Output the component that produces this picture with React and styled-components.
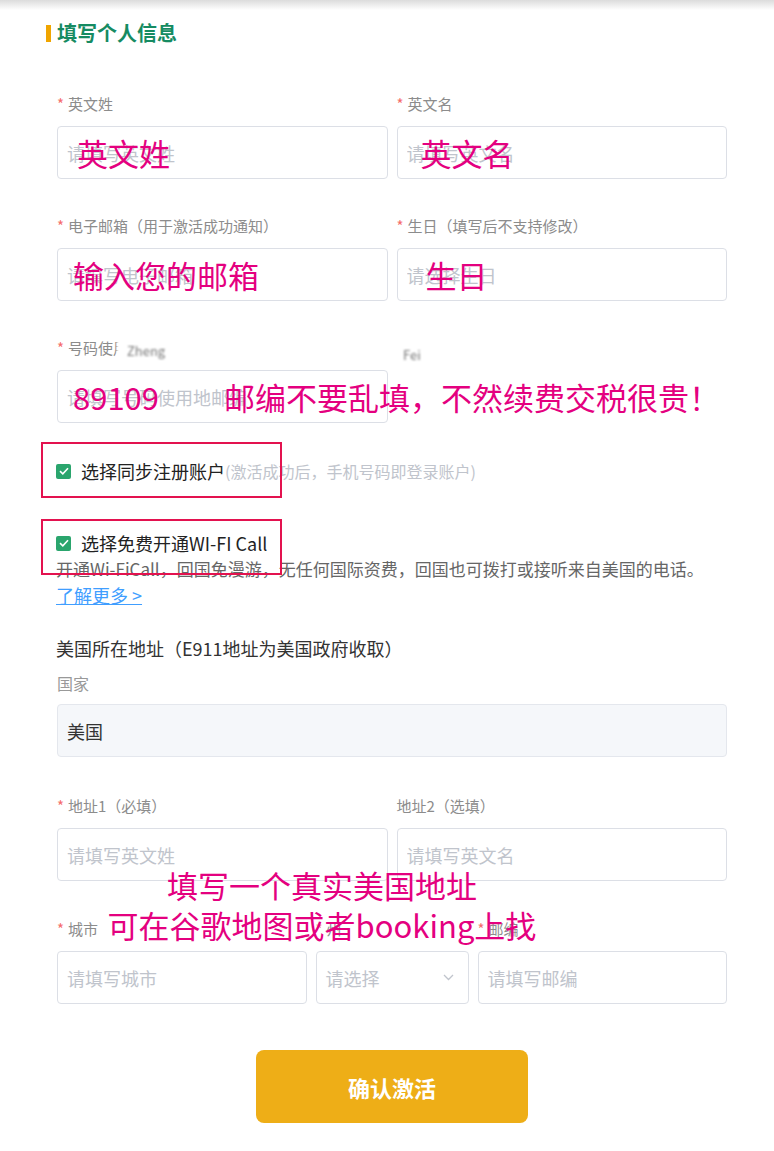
import React from 'react';
import styled, { createGlobalStyle } from 'styled-components';

const Global = createGlobalStyle`
  html, body { margin: 0; padding: 0; background: #fff; }
  body { font-family: "Noto Sans CJK SC", "Noto Sans", sans-serif; color: #333; }
  * { box-sizing: border-box; }
`;

const TopShade = styled.div`
  height: 10px;
  background: linear-gradient(#dcdcdc, #ffffff);
`;

const Page = styled.main`
  width: 774px;
  padding: 0 47px 28px 57px;
`;

const Heading = styled.h2`
  display: flex;
  align-items: center;
  gap: 6px;
  margin: 12px 0 0 -11px;
  height: 22px;
  font-size: 20px;
  font-weight: 700;
  color: #168b62;
  line-height: 22px;
`;

const HeadBar = styled.span`
  width: 5px;
  height: 17px;
  background: #f0a500;
`;

const Grid = styled.div`
  display: grid;
  grid-template-columns: ${p => p.$cols || '1fr 1fr'};
  column-gap: 9px;
  row-gap: 37px;
  margin-top: ${p => p.$mt || 0}px;
`;

const Field = styled.div`
  position: relative;
  display: flex;
  flex-direction: column;
`;

const Label = styled.div`
  height: 20px;
  line-height: 20px;
  font-size: 15px;
  color: #8c8c8c;
  margin-bottom: 12px;
  white-space: nowrap;
`;

const Star = styled.span`
  color: #f56c6c;
  margin-right: 4px;
`;

const InputWrap = styled.div`
  position: relative;
`;

const Input = styled.input`
  display: block;
  width: 100%;
  height: 53px;
  border: 1px solid #dcdfe6;
  border-radius: 4px;
  padding: 0 9px;
  font-family: inherit;
  font-size: 18px;
  color: #333;
  background: ${p => (p.$disabled ? '#f5f7fa' : '#fff')};
  border-color: ${p => (p.$disabled ? '#e4e7ed' : '#dcdfe6')};
  outline: none;
  &::placeholder { color: #c0c4cc; }
`;

const Select = styled.div`
  display: flex;
  align-items: center;
  justify-content: space-between;
  height: 53px;
  border: 1px solid #dcdfe6;
  border-radius: 4px;
  padding: 0 14px 0 9px;
  font-size: 18px;
  color: #c0c4cc;
`;

const Note = styled.span`
  position: absolute;
  left: ${p => p.$left}px;
  top: 11px;
  font-size: 31px;
  line-height: 31px;
  color: #e4007f;
  white-space: nowrap;
  pointer-events: none;
`;

const BlurPatch = styled.span`
  position: absolute;
  left: ${p => p.$left}px;
  top: ${p => p.$top}px;
  height: 24px;
  padding: 0 ${p => p.$pad}px;
  background: #fff;
  font-size: 13px;
  line-height: 24px;
  color: #777;
  filter: blur(1.3px);
`;

const CheckRow = styled.div`
  position: relative;
  display: flex;
  align-items: center;
  height: 24px;
  margin-top: ${p => p.$mt}px;
  margin-left: -1px;
`;

const Box = styled.span`
  display: flex;
  align-items: center;
  justify-content: center;
  width: 15px;
  height: 15px;
  border-radius: 2px;
  background: #2aa56d;
  margin-right: 10px;
`;

const CheckText = styled.span`
  font-size: 18px;
  color: #222;
  white-space: nowrap;
`;

const CheckHint = styled.span`
  font-size: 16px;
  color: #c0c4cc;
  white-space: nowrap;
`;

const RedFrame = styled.span`
  position: absolute;
  left: -15px;
  top: ${p => p.$top}px;
  width: 241px;
  height: 56px;
  border: 2px solid #e3124f;
  pointer-events: none;
`;

const Desc = styled.p`
  margin: 2px 0 0 -1px;
  font-size: 17px;
  line-height: 24px;
  color: #666;
  white-space: nowrap;
`;

const More = styled.a`
  display: block;
  margin: 2px 0 0 -1px;
  width: max-content;
  font-size: 18px;
  line-height: 24px;
  color: #409eff;
  text-decoration: underline;
`;

const SectionTitle = styled.div`
  margin: 29px 0 0 -1px;
  font-size: 18px;
  line-height: 24px;
  color: #333;
`;

const PlainLabel = styled(Label)`
  margin-top: 13px;
  margin-bottom: 11px;
  font-size: 16px;
  color: #999;
`;

const Address = styled.div`
  position: relative;
  margin-top: 39px;
`;

const AddressNote = styled.div`
  position: absolute;
  left: 0;
  top: 69px;
  width: 530px;
  text-align: center;
  font-size: 31px;
  line-height: 40px;
  color: #e4007f;
  pointer-events: none;
`;

const Submit = styled.button`
  display: block;
  margin: 46px auto 0;
  width: 272px;
  height: 73px;
  border: none;
  border-radius: 8px;
  background: #eeae17;
  color: #fff;
  font-family: inherit;
  font-size: 22px;
  font-weight: 700;
`;

const Check = () => (
  <Box>
    <svg width="10" height="8" viewBox="0 0 10 8">
      <path d="M1 4.2 L3.8 6.8 L9 1.2" fill="none" stroke="#fff" strokeWidth="1.6" />
    </svg>
  </Box>
);

const Chevron = () => (
  <svg width="11" height="7" viewBox="0 0 11 7">
    <path d="M1 1 L5.5 5.5 L10 1" fill="none" stroke="#c0c4cc" strokeWidth="1.3" />
  </svg>
);

function TextField({ label, required = true, placeholder, note, noteLeft, value, disabled, children }) {
  return (
    <Field>
      <Label>
        {required && <Star>*</Star>}
        {label}
      </Label>
      <InputWrap>
        <Input readOnly placeholder={placeholder} defaultValue={value} $disabled={disabled} />
        {note && <Note $left={noteLeft}>{note}</Note>}
        {children}
      </InputWrap>
    </Field>
  );
}

export default function App() {
  return (
    <>
      <Global />
      <TopShade />
      <Page>
        <Heading>
          <HeadBar />
          填写个人信息
        </Heading>

        <Grid $mt={50}>
          <TextField label="英文姓" placeholder="请填写英文姓" note="英文姓" noteLeft={20} />
          <TextField label="英文名" placeholder="请填写英文名" note="英文名" noteLeft={24} />
          <TextField label="电子邮箱（用于激活成功通知）" placeholder="请填写电子邮箱" note="输入您的邮箱" noteLeft={16} />
          <TextField label="生日（填写后不支持修改）" placeholder="请选择生日" note="生日" noteLeft={29} />
          <Field>
            <Label>
              <Star>*</Star>
              号码使用地邮编
            </Label>
            <BlurPatch $left={60} $top={1} $pad={10}>Zheng</BlurPatch>
            <BlurPatch $left={343} $top={5} $pad={3}>Fei</BlurPatch>
            <InputWrap>
              <Input readOnly placeholder="请填写号码使用地邮编" />
              <Note $left={16}>89109</Note>
              <Note $left={167}>邮编不要乱填，不然续费交税很贵！</Note>
            </InputWrap>
          </Field>
        </Grid>

        <CheckRow $mt={36}>
          <Check />
          <CheckText>选择同步注册账户</CheckText>
          <CheckHint>(激活成功后，手机号码即登录账户)</CheckHint>
          <RedFrame $top={-17} />
        </CheckRow>

        <CheckRow $mt={48}>
          <Check />
          <CheckText>选择免费开通WI-FI Call</CheckText>
          <RedFrame $top={-12} />
        </CheckRow>
        <Desc>开通Wi-FiCall，回国免漫游，无任何国际资费，回国也可拨打或接听来自美国的电话。</Desc>
        <More href="#">了解更多 &gt;</More>

        <SectionTitle>美国所在地址（E911地址为美国政府收取）</SectionTitle>
        <PlainLabel>国家</PlainLabel>
        <Input readOnly value="美国" $disabled />

        <Address>
          <Grid>
            <TextField label="地址1（必填）" placeholder="请填写英文姓" />
            <TextField label="地址2（选填）" required={false} placeholder="请填写英文名" />
          </Grid>
          <Grid $cols="1fr 153px 1fr" $mt={38}>
            <TextField label="城市" placeholder="请填写城市" />
            <Field>
              <Label>
                <Star>*</Star>州
              </Label>
              <Select>
                请选择
                <Chevron />
              </Select>
            </Field>
            <TextField label="邮编" placeholder="请填写邮编" />
          </Grid>
          <AddressNote>
            填写一个真实美国地址
            <br />
            可在谷歌地图或者booking上找
          </AddressNote>
        </Address>

        <Submit type="button">确认激活</Submit>
      </Page>
    </>
  );
}
